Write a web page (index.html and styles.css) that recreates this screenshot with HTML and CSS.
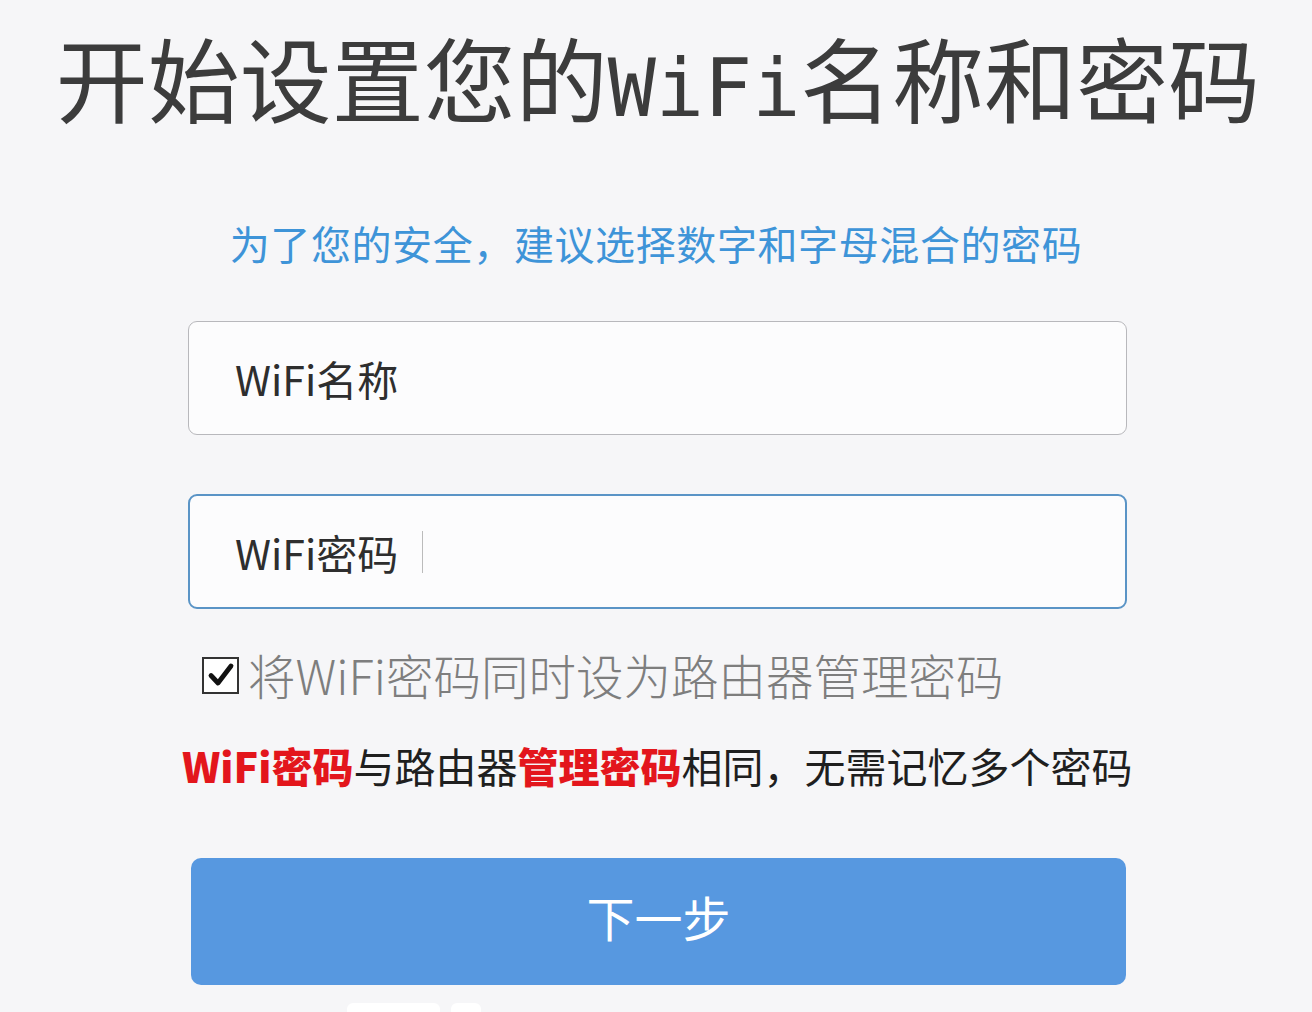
FILE: index.html
```html
<!DOCTYPE html>
<html lang="zh-CN">
<head>
    <meta charset="UTF-8">
    <meta name="viewport" content="width=device-width, initial-scale=1.0">
    <title>WiFi设置</title>
    <link rel="stylesheet" href="styles.css">
</head>
<body>
    <div class="page">
        <h1 class="title">开始设置您的<span class="mono">WiFi</span>名称和密码</h1>
        <p class="tip">为了您的安全，建议选择数字和字母混合的密码</p>

        <div class="form">
            <div class="field">
                <span class="field-label">WiFi名称</span>
            </div>
            <div class="field field-active">
                <span class="field-label">WiFi密码</span>
                <span class="caret"></span>
            </div>

            <label class="check-row">
                <span class="check-box">
                    <svg width="30" height="30" viewBox="0 0 30 30">
                        <path d="M5 15.5 L12 23 L25 6" fill="none" stroke="#111" stroke-width="4.8" stroke-linecap="round" stroke-linejoin="round"/>
                    </svg>
                </span>
                <span class="check-text">将WiFi密码同时设为路由器管理密码</span>
            </label>

            <p class="note"><b class="red">WiFi密码</b>与路由器<b class="red">管理密码</b>相同，无需记忆多个密码</p>

            <button class="next-btn">下一步</button>

            <div class="bottom-bits">
                <div class="bit bit-wide"></div>
                <div class="bit bit-small"></div>
            </div>
        </div>
    </div>
</body>
</html>
```

FILE: styles.css
```css
body {
    margin: 0;
    padding: 0;
    background-color: #f6f6f8;
    font-family: "Noto Sans CJK SC", "Noto Sans", sans-serif;
    color: #333;
    height: 1012px;
    overflow: hidden;
}

.page {
    display: flex;
    flex-direction: column;
    align-items: center;
}

.title {
    margin: 16px 0 0 4px;
    font-size: 92px;
    font-weight: 400;
    line-height: 120px;
    color: #3c3c3c;
    white-space: nowrap;
}

.title .mono {
    font-family: "DejaVu Sans Mono", monospace;
    font-size: 80px;
    font-weight: normal;
}

.tip {
    margin: 70px 0 0 0;
    font-size: 40px;
    line-height: 48px;
    color: #3e94d8;
    letter-spacing: 0.6px;
}

.form {
    width: 939px;
    margin-left: 3px;
    display: flex;
    flex-direction: column;
}

.field {
    height: 112px;
    margin-top: 54px;
    border: 1px solid #b8b8bc;
    border-radius: 9px;
    background: #fcfcfd;
    display: flex;
    align-items: center;
    padding-left: 46px;
}

.field-active {
    margin-top: 59px;
    border: 2px solid #5a94c6;
    height: 111px;
    padding-left: 45px;
}

.field-label {
    font-size: 41px;
    color: #2e2e2e;
}

.caret {
    width: 1px;
    height: 42px;
    margin-left: 24px;
    background: #bbb;
}

.check-row {
    display: flex;
    align-items: center;
    margin: 38px 0 0 14px;
}

.check-box {
    width: 33px;
    height: 33px;
    border: 2px solid #333;
    background: #fff;
    display: flex;
    align-items: center;
    justify-content: center;
}

.check-text {
    margin-left: 9px;
    font-size: 47.5px;
    line-height: 56px;
    color: #7e7e7e;
    font-weight: 300;
}

.note {
    margin: 38px 0 0 -6px;
    font-size: 41px;
    line-height: 48px;
    color: #1f1f1f;
    white-space: nowrap;
}

.red {
    color: #e3161c;
    font-weight: 900;
}

.next-btn {
    margin: 69px 1px 0 3px;
    height: 127px;
    padding-bottom: 12px;
    border: none;
    border-radius: 10px;
    background-color: #5798e0;
    color: #fff;
    font-family: "Noto Sans CJK SC", sans-serif;
    font-size: 48px;
}

.bottom-bits {
    display: flex;
    gap: 11px;
    margin: 18px 0 0 159px;
}

.bit {
    height: 20px;
    background: #fff;
    border-radius: 6px;
}

.bit-wide {
    width: 93px;
}

.bit-small {
    width: 30px;
}
```
